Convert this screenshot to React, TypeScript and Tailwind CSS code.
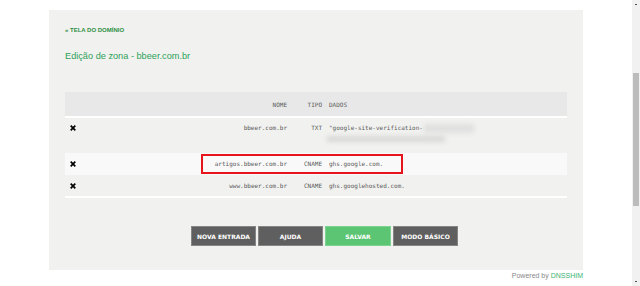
import React from "react";

const XIcon = () => (
  <svg width="6" height="6" viewBox="0 0 6 6" className="block">
    <path d="M0.7 0.7 L5.3 5.3 M5.3 0.7 L0.7 5.3" stroke="#000" strokeWidth="1.7" />
  </svg>
);

const mono = { fontFamily: '"DejaVu Sans Mono", "Liberation Mono", monospace' };

function Row({
  nome,
  tipo,
  children,
  className,
  extra,
}: {
  nome: string;
  tipo: string;
  children: React.ReactNode;
  className: string;
  extra?: React.ReactNode;
}) {
  return (
    <div className={"relative flex text-[6px] text-[#5a5a5a] " + className} style={mono}>
      <div className="w-[20px] pl-[5px] h-[10px] flex items-center">
        <XIcon />
      </div>
      <div className="w-[202px] text-right leading-[10px]">{nome}</div>
      <div className="w-[35px] text-right leading-[10px]">{tipo}</div>
      <div className="pl-[7px] leading-[10px] flex-1">{children}</div>
      {extra}
    </div>
  );
}

export default function App() {
  return (
    <div className="flex w-[640px] h-[286px] overflow-hidden bg-white">
      <div className="w-[632px] h-[286px] pt-[10px] pl-[49px]">
        <div className="w-[534px] h-[260px] bg-[#f1f1ef] pl-[16px] pt-[16px] flex flex-col">
          <div
            className="h-[8px] leading-[8px] text-[6px] font-bold text-[#2f8f3f]"
            style={{ fontFamily: '"Liberation Sans", Arial, sans-serif' }}
          >
            « TELA DO DOMÍNIO
          </div>
          <div
            className="mt-[16px] h-[12px] leading-[12px] text-[9.2px] text-[#2ea15a]"
            style={{ fontFamily: '"Liberation Sans", Arial, sans-serif' }}
          >
            Edição de zona - bbeer.com.br
          </div>
          <div className="mt-[30px] w-[502px]">
            <div className="h-[24px] bg-[#e8e8e8] flex items-center text-[6px] text-[#5a5a5a]" style={mono}>
              <div className="w-[20px]" />
              <div className="w-[202px] text-right">NOME</div>
              <div className="w-[35px] text-right">TIPO</div>
              <div className="pl-[7px]">DADOS</div>
            </div>
            <div className="h-[2px] bg-white" />
            <Row nome="bbeer.com.br" tipo="TXT" className="h-[35px] pt-[5px]">
              <div className="flex items-center h-[10px]">
                <span>"google-site-verification-</span>
                <span className="inline-block w-[50px] h-[9px] bg-[#e0e0e0] blur-[2px] ml-[1px]" />
              </div>
              <div className="mt-[3px] ml-[-2px] w-[118px] h-[6px] bg-[#d9d9d9] blur-[2px]" />
            </Row>
            <Row
              nome="artigos.bbeer.com.br"
              tipo="CNAME"
              className="h-[22px] pt-[6px] bg-[#f9f9f9]"
              extra={
                <div className="absolute left-[136px] top-[1px] w-[202px] h-[20px] border-2 border-[#e8141c]" />
              }
            >
              ghs.google.com.
            </Row>
            <Row nome="www.bbeer.com.br" tipo="CNAME" className="h-[21px] pt-[6px]">
              ghs.googlehosted.com.
            </Row>
            <div className="h-[2px] bg-white" />
          </div>
          <div
            className="mt-[28px] pl-[126px] flex gap-[2px] text-[6px] font-bold text-white"
            style={{ fontFamily: '"DejaVu Sans", Verdana, sans-serif' }}
          >
            <div className="w-[65px] h-[20px] bg-[#5f5f5f] border border-[#858585] flex items-center justify-center">
              NOVA ENTRADA
            </div>
            <div className="w-[65px] h-[20px] bg-[#5f5f5f] border border-[#858585] flex items-center justify-center">
              AJUDA
            </div>
            <div className="w-[66px] h-[20px] bg-[#5cc574] border border-[#7bd48f] flex items-center justify-center">
              SALVAR
            </div>
            <div className="w-[65px] h-[20px] bg-[#5f5f5f] border border-[#858585] flex items-center justify-center">
              MODO BÁSICO
            </div>
          </div>
        </div>
        <div
          className="w-[534px] text-right text-[7px] leading-[10px] mt-[1px] text-[#888]"
          style={{ fontFamily: '"Liberation Sans", Arial, sans-serif' }}
        >
          Powered by <span className="text-[#3cb371]">DNSSHIM</span>
        </div>
      </div>
      <div className="w-[8px] h-[286px] bg-[#f1f1f1] relative">
        <div className="absolute left-[3px] top-[4px] w-[2px] h-[1px] bg-[#505050]" />
        <div className="absolute left-[1px] top-[73px] w-[6px] h-[133px] bg-[#bcbcbc]" />
        <div className="absolute left-[3px] top-[281px] w-[2px] h-[1px] bg-[#505050]" />
      </div>
    </div>
  );
}
